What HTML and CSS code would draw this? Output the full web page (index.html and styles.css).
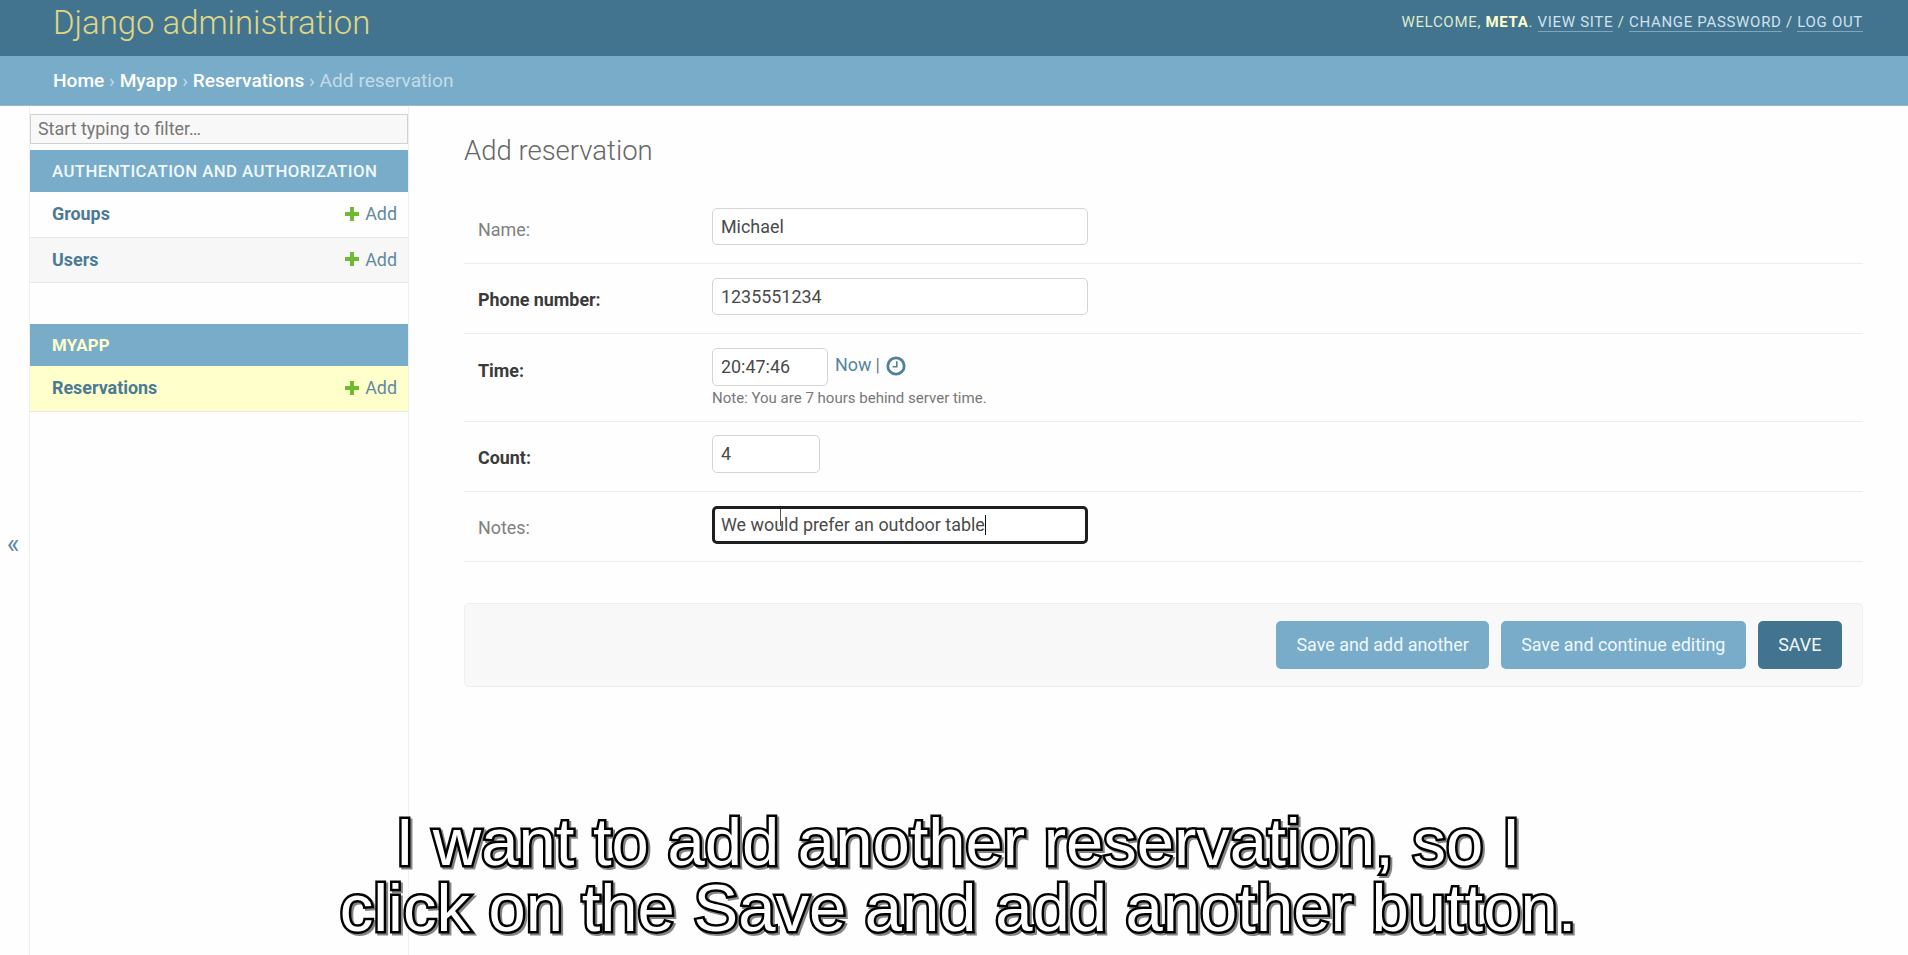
FILE: index.html
```html
<!DOCTYPE html>
<html lang="en">
<head>
<meta charset="utf-8">
<title>Add reservation | Django site admin</title>
<link rel="stylesheet" href="styles.css">
</head>
<body>
<header class="header">
  <h1 class="brand">Django administration</h1>
  <div class="user-tools">Welcome, <strong>Meta</strong>. <a>View site</a> / <a>Change password</a> / <a>Log out</a></div>
</header>
<nav class="breadcrumbs"><a>Home</a> › <a>Myapp</a> › <a>Reservations</a> › Add reservation</nav>
<div class="main">
  <div class="toggle">«</div>
  <aside class="sidebar">
    <div class="filter">Start typing to filter…</div>
    <section class="app">
      <h2 class="caption">Authentication and Authorization</h2>
      <div class="model"><b>Groups</b><span class="add"><svg class="plus" viewBox="0 0 14 14"><path d="M5 0h4v5h5v4H9v5H5V9H0V5h5z"/></svg>Add</span></div>
      <div class="model alt"><b>Users</b><span class="add"><svg class="plus" viewBox="0 0 14 14"><path d="M5 0h4v5h5v4H9v5H5V9H0V5h5z"/></svg>Add</span></div>
    </section>
    <section class="app">
      <h2 class="caption current">Myapp</h2>
      <div class="model selected"><b>Reservations</b><span class="add"><svg class="plus" viewBox="0 0 14 14"><path d="M5 0h4v5h5v4H9v5H5V9H0V5h5z"/></svg>Add</span></div>
    </section>
  </aside>
  <main class="content">
    <h2 class="title">Add reservation</h2>
    <div class="row"><label>Name:</label><div class="field">Michael</div></div>
    <div class="row"><label class="required">Phone number:</label><div class="field">1235551234</div></div>
    <div class="row time-row"><label class="required">Time:</label>
      <div>
        <div class="time-line"><div class="field time">20:47:46</div><span class="shortcuts"><a>Now</a><span class="bar">|</span><svg class="clock" viewBox="0 0 20 20"><circle cx="10" cy="10" r="8.2"/><path d="M10.8 5.2v5.6H6.6"/></svg></span></div>
        <div class="help">Note: You are 7 hours behind server time.</div>
      </div>
    </div>
    <div class="row"><label class="required">Count:</label><div class="field count">4</div></div>
    <div class="row"><label>Notes:</label><div class="field focus">We would prefer an outdoor table<i class="caret"></i><i class="pointer"></i></div></div>
    <div class="submit-row"><button>Save and add another</button><button>Save and continue editing</button><button class="default">SAVE</button></div>
  </main>
</div>
<div class="subtitle">I want to add another reservation, so I<br>click on the Save and add another button.</div>
</body>
</html>
```

FILE: styles.css
```css
* { box-sizing: border-box; }
body {
  margin: 0;
  height: 955px;
  overflow: hidden;
  background: #fefefe;
  color: #4a4a4a;
  font: 17.9px/20px Roboto, sans-serif;
  display: flex;
  flex-direction: column;
}
h1, h2 { margin: 0; }
.header {
  height: 56px;
  flex: none;
  padding: 0 45px 0 53px;
  background: #427490;
  display: flex;
  justify-content: space-between;
}
.brand { font-size: 32.9px; font-weight: 300; line-height: 46px; color: #e0d684; }
.user-tools {
  font-size: 15px;
  line-height: 44px;
  letter-spacing: .69px;
  text-transform: uppercase;
  color: #dcebc8;
}
.user-tools strong { color: #ffffcc; }
.user-tools a { color: #cfe2ee; border-bottom: 1px solid #7fa6bb; }
.breadcrumbs {
  height: 50px;
  flex: none;
  padding-left: 53px;
  font-size: 19.15px;
  line-height: 49px;
  background: #78acc9;
  color: #c4dce8;
  border-bottom: 1px solid #98b6c8;
}
.breadcrumbs a { color: #fff; font-weight: 500; }
.main { flex: 1; display: flex; }
.toggle {
  width: 29px;
  flex: none;
  padding: 428px 3px 0 0;
  text-align: center;
  font-size: 27px;
  color: #5e8ba3;
}
.sidebar {
  width: 380px;
  flex: none;
  border: solid #efefef;
  border-width: 0 1px;
  padding-top: 8px;
}
.filter {
  height: 30px;
  margin-bottom: 6px;
  padding-left: 7px;
  border: 1px solid #ccd2d5;
  line-height: 28px;
  background: #f8f8f8;
  color: #777;
}
.app { margin-bottom: 41px; }
.caption {
  height: 42px;
  padding-left: 22px;
  background: #78acc9;
  color: #f0f8fc;
  font-size: 16.8px;
  font-weight: 500;
  line-height: 43px;
  letter-spacing: .42px;
  text-transform: uppercase;
}
.current { color: #ffffcc; font-weight: 700; letter-spacing: .25px; }
.model {
  height: 45.5px;
  padding: 0 11px 0 22px;
  border-bottom: 1px solid #e8e8e8;
  display: flex;
  justify-content: space-between;
  line-height: 43px;
  color: #4b7b94;
}
.model b { font-weight: 700; }
.alt { background: #f7f7f7; }
.selected { background: #ffffcc; }
.add { height: 43px; display: flex; align-items: center; gap: 6px; color: #6189a0; }
.plus { width: 14px; height: 14px; fill: #70b932; }
.content { flex: 1; padding: 28px 45px 0 55px; }
.title { height: 59px; font-size: 27.5px; font-weight: 300; line-height: 34px; color: #666; }
.row {
  height: 70px;
  padding: 14px 0 0 14px;
  border-bottom: 1px solid #ededed;
  display: flex;
}
.row:nth-child(2) { height: 71px; padding-top: 15px; }
.row label { width: 234px; padding-top: 12px; color: #808080; }
.row .required { color: #3a3a3a; font-weight: 700; }
.time-row { height: 88px; }
.time-row label { padding-top: 13px; }
.field {
  position: relative;
  width: 376px;
  height: 37px;
  padding-left: 8px;
  border: 1px solid #d4d4d4;
  border-radius: 5px;
  line-height: 36px;
  background: #fff;
}
.time { width: 116px; height: 38px; }
.count { width: 108px; height: 38px; margin-top: -1px; }
.focus { height: 38px; border: 3px solid #1c1e20; padding-left: 6px; line-height: 32px; }
.caret { display: inline-block; width: 1px; height: 20px; background: #111; vertical-align: -4px; }
.pointer { position: absolute; left: 65px; top: 0; width: 1px; height: 17px; background: #555; }
.time-line { display: flex; }
.shortcuts { display: flex; padding: 7px 0 0 7px; }
.shortcuts a { color: #55859e; }
.bar { margin: 0 6px 0 4px; color: #777; }
.clock { width: 20px; height: 20px; margin-top: 1px; fill: none; stroke: #50819b; stroke-width: 2.8; }
.clock path { stroke-width: 1.6; }
.help { padding-top: 2px; font-size: 15.03px; color: #777; }
.submit-row {
  height: 84px;
  margin-top: 41px;
  padding: 17px 20px 0;
  border: 1px solid #eee;
  border-radius: 5px;
  background: #f8f8f8;
  display: flex;
  justify-content: flex-end;
  gap: 12px;
}
.submit-row button {
  height: 48px;
  padding: 0 20.2px;
  border: 0;
  border-radius: 5px;
  background: #78acc9;
  color: #f0f8fc;
  font: inherit;
}
.submit-row .default { padding: 0 20.7px; background: #427490; }
.subtitle {
  position: absolute;
  left: 0;
  top: 809px;
  width: 1916px;
  text-align: center;
  font: 67px/66px "Liberation Sans", sans-serif;
  color: #fff;
  -webkit-text-stroke: 5px #000;
  stroke-linejoin: round;
  paint-order: stroke fill;
  filter: drop-shadow(2px 2px 0 #858585);
}
```
